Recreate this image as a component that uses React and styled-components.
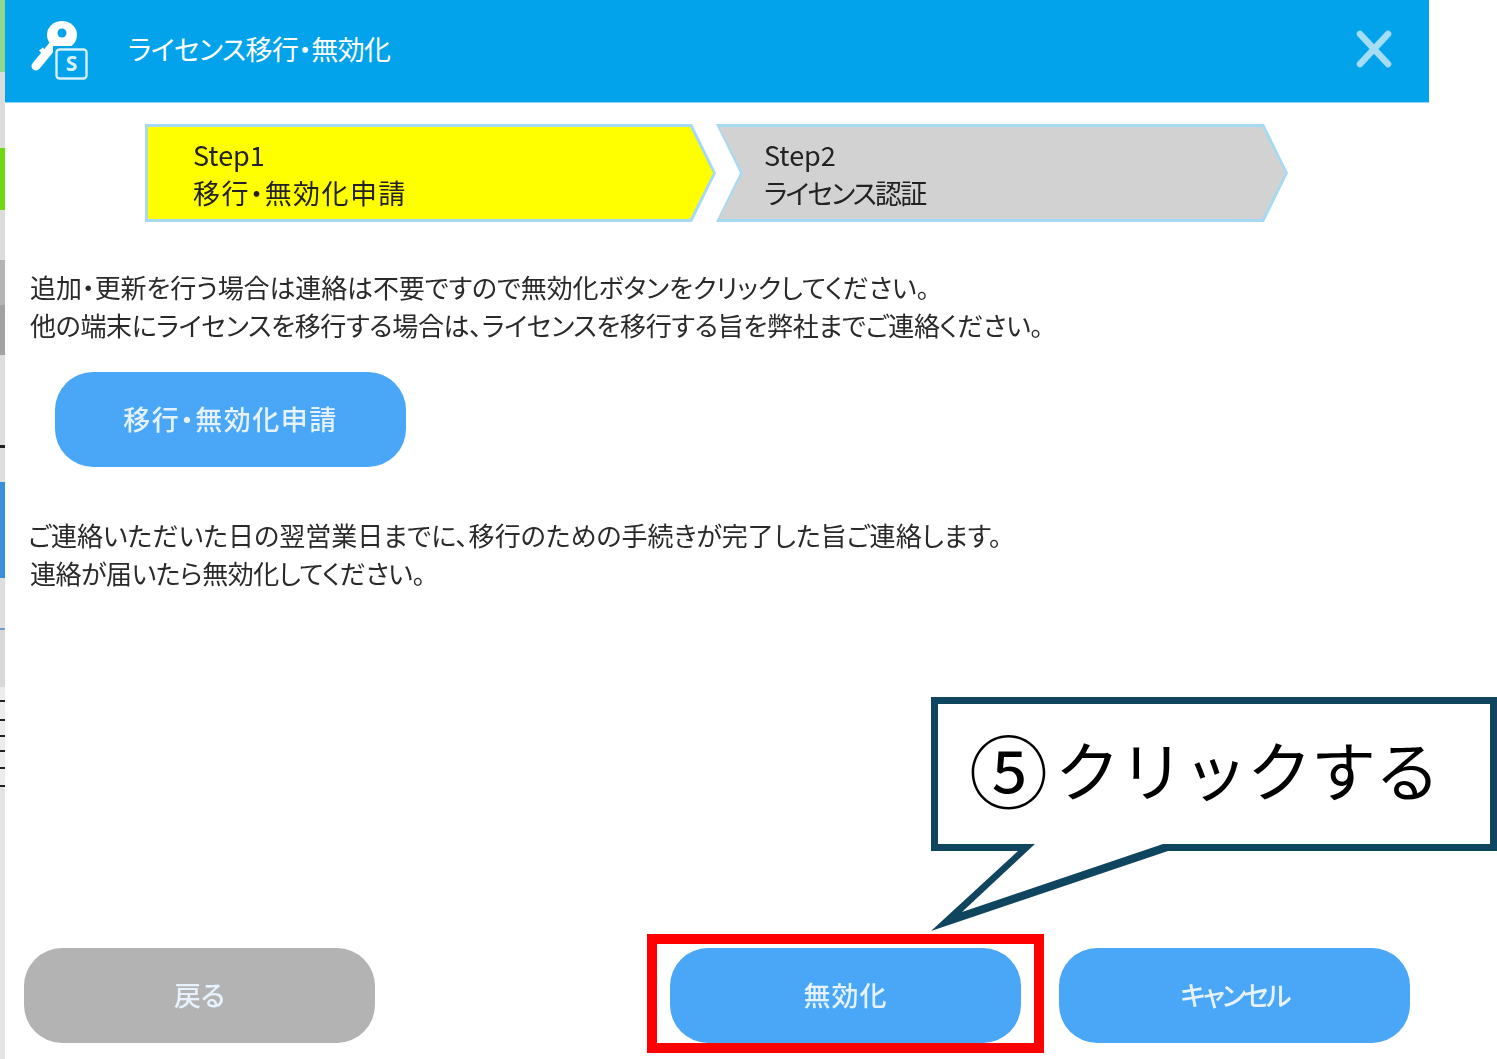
import React from "react";
import styled, { createGlobalStyle } from "styled-components";

const Global = createGlobalStyle`
  html, body { margin: 0; padding: 0; background: #fff; }
  body { font-family: "Noto Sans CJK JP", "Noto Sans", sans-serif; overflow: hidden; }
`;

const Page = styled.div`
  position: relative;
  display: flex;
  width: 1497px;
  height: 1059px;
  overflow: hidden;
  background: #fff;
`;

const Strip = styled.div`
  display: flex;
  flex-direction: column;
  width: 5px;
  flex: none;
  filter: blur(0.4px);
`;

const StripPart = styled.div`
  height: ${(p) => p.$h}px;
  background: ${(p) => p.$c};
  flex: none;
`;

const Dialog = styled.div`
  display: flex;
  flex-direction: column;
  width: 1424px;
  height: 1059px;
  flex: none;
  filter: blur(0.6px);
  font-feature-settings: "palt" 1;
`;

const Header = styled.header`
  display: flex;
  align-items: center;
  height: 103px;
  padding: 0 35px 5px 24px;
  box-sizing: border-box;
  background: #02a3ea;
  border-bottom: 1px solid #8fd6f6;
  flex: none;
`;

const KeyLogo = styled.svg`
  width: 62px;
  height: 62px;
  flex: none;
`;

const Title = styled.h1`
  margin: 0 0 0 37px;
  flex: 1;
  font-size: 27px;
  font-weight: 400;
  line-height: 38px;
  letter-spacing: -0.6px;
  color: #fff;
`;

const CloseIcon = styled.svg`
  width: 40px;
  height: 40px;
  flex: none;
`;

const Steps = styled.div`
  display: flex;
  margin: 21px 0 0 140px;
  flex: none;
`;

const Step = styled.div`
  position: relative;
  width: ${(p) => p.$w}px;
  height: 98px;
  padding: 12px 0 0 48px;
  box-sizing: border-box;
  background: #a6d9f2;
  clip-path: ${(p) =>
    p.$notch
      ? "polygon(0 0, calc(100% - 24px) 0, 100% 50%, calc(100% - 24px) 100%, 0 100%, 24px 50%)"
      : "polygon(0 0, calc(100% - 24px) 0, 100% 50%, calc(100% - 24px) 100%, 0 100%)"};

  &::before {
    content: "";
    position: absolute;
    inset: 0;
    background: ${(p) => p.$fill};
    clip-path: ${(p) =>
      p.$notch
        ? "polygon(3px 3px, calc(100% - 26px) 3px, calc(100% - 3px) 50%, calc(100% - 26px) 95px, 3px 95px, 27px 50%)"
        : "polygon(3px 3px, calc(100% - 26px) 3px, calc(100% - 3px) 50%, calc(100% - 26px) 95px, 3px 95px)"};
  }
`;

const StepLine = styled.div`
  position: relative;
  font-size: 27px;
  line-height: 37.5px;
  letter-spacing: ${(p) => p.$ls || 0}px;
  color: #222;
`;

const Body = styled.div`
  margin: ${(p) => p.$top}px 0 0 25px;
  flex: none;
`;

const BodyLine = styled.p`
  margin: 0 0 0 ${(p) => p.$shift || 0}px;
  font-size: 26px;
  line-height: 38px;
  letter-spacing: ${(p) => p.$ls}px;
  color: #2a2a2a;
  white-space: nowrap;
`;

const Pill = styled.button`
  display: flex;
  align-items: center;
  justify-content: center;
  width: 351px;
  height: 95px;
  padding: 0 0 3px;
  border: none;
  border-radius: 38px;
  background: ${(p) => (p.$muted ? "#b3b3b3" : "#4aa6f6")};
  color: #e6f3fe;
  font-family: inherit;
  font-feature-settings: inherit;
  font-size: 27px;
  font-weight: 500;
  letter-spacing: ${(p) => p.$ls || 0}px;
  flex: none;
`;

const ApplyPill = styled(Pill)`
  margin: 28px 0 0 50px;
`;

const Footer = styled.footer`
  display: flex;
  align-items: center;
  margin-top: auto;
  padding: 0 19px 16px 19px;
  flex: none;
`;

const FooterRight = styled.div`
  display: flex;
  gap: 38px;
  margin-left: auto;
`;

const Highlight = styled.div`
  position: absolute;
  left: 647px;
  top: 934px;
  width: 397px;
  height: 119px;
  box-sizing: border-box;
  border: 10px solid #ff0000;
  pointer-events: none;
`;

const Callout = styled.div`
  position: absolute;
  left: 931px;
  top: 697px;
  width: 566px;
  height: 154px;
  box-sizing: border-box;
  display: flex;
  align-items: center;
  padding: 0 0 12px 31px;
  border: 7px solid #10455f;
  background: #fff;
  color: #000;
  font-size: 65px;
  line-height: 1;
  letter-spacing: -1px;
  white-space: nowrap;
`;

const Circled = styled.span`
  font-size: 79px;
  font-weight: 400;
  margin-right: 8px;
`;

const CalloutTail = styled.svg`
  position: absolute;
  left: 925px;
  top: 840px;
  width: 250px;
  height: 95px;
`;

const stripParts = [
  [72, "#8fd98f"], [76, "#dcdcdc"], [62, "#6fd80f"], [50, "#dcdcdc"], [45, "#b4b4b4"], [50, "#a2a2a2"],
  [90, "#dedede"], [3, "#222"], [34, "#dedede"], [96, "#3a8fdc"], [50, "#dedede"], [2, "#6d9bd0"],
  [57, "#d8d8d8"], [13, "#ececec"], [2, "#222"], [17, "#ececec"], [2, "#222"], [14, "#ececec"],
  [2, "#222"], [13, "#ececec"], [2, "#222"], [15, "#ececec"], [2, "#222"], [16, "#ececec"],
  [2, "#222"], [272, "#e4e4e4"],
];

export default function App() {
  return (
    <Page>
      <Global />
      <Strip>
        {stripParts.map(([h, c], i) => (
          <StripPart key={i} $h={h} $c={c} />
        ))}
      </Strip>
      <Dialog>
        <Header>
          <KeyLogo viewBox="0 0 62 62" aria-hidden="true">
            <ellipse cx="33" cy="17" rx="15" ry="14" fill="#fff" />
            <path d="M26 25 L7 48" stroke="#fff" strokeWidth="9" strokeLinecap="round" />
            <path d="M17 37 L12 31" stroke="#fff" strokeWidth="5" />
            <circle cx="33" cy="15" r="4.500" fill="#02a3ea" />
            <rect x="24" y="28" width="38" height="34" fill="#02a3ea" />
            <rect x="27.500" y="31.500" width="30" height="29" rx="3" fill="#02a3ea" stroke="#d8f1fc" strokeWidth="2.400" />
            <text x="42.500" y="53" textAnchor="middle" fontSize="21" fontWeight="700" fill="#d8f1fc" fontFamily="Noto Sans, sans-serif">S</text>
          </KeyLogo>
          <Title>ライセンス移行・無効化</Title>
          <CloseIcon viewBox="0 0 40 40" aria-hidden="true">
            <path d="M6 5 L34 35 M34 5 L6 35" stroke="#a5dcf6" strokeWidth="6.500" strokeLinecap="round" />
          </CloseIcon>
        </Header>
        <Steps>
          <Step $w={571} $fill="#ffff00">
            <StepLine>Step1</StepLine>
            <StepLine $ls={1.4}>移行・無効化申請</StepLine>
          </Step>
          <Step $w={572} $notch $fill="#d2d2d2">
            <StepLine>Step2</StepLine>
            <StepLine $ls={-1.9}>ライセンス認証</StepLine>
          </Step>
        </Steps>
        <Body $top={46}>
          <BodyLine $ls={-0.12}>追加・更新を行う場合は連絡は不要ですので無効化ボタンをクリックしてください。</BodyLine>
          <BodyLine $ls={-0.32}>他の端末にライセンスを移行する場合は、ライセンスを移行する旨を弊社までご連絡ください。</BodyLine>
        </Body>
        <ApplyPill $ls={1.5}>移行・無効化申請</ApplyPill>
        <Body $top={49}>
          <BodyLine $ls={0.02} $shift={-2}>ご連絡いただいた日の翌営業日までに、移行のための手続きが完了した旨ご連絡します。</BodyLine>
          <BodyLine $ls={-0.45}>連絡が届いたら無効化してください。</BodyLine>
        </Body>
        <Footer>
          <Pill $muted>戻る</Pill>
          <FooterRight>
            <Pill $ls={1}>無効化</Pill>
            <Pill $ls={-2.800}>キャンセル</Pill>
          </FooterRight>
        </Footer>
      </Dialog>
      <Highlight />
      <Callout>
        <Circled>⑤</Circled>クリックする
      </Callout>
      <CalloutTail viewBox="0 0 250 95" aria-hidden="true">
        <path d="M93 11 L6 91 L243 11 Z" fill="#10455f" />
        <path d="M111 3 L37 72 L241 3 Z" fill="#fff" />
      </CalloutTail>
    </Page>
  );
}
